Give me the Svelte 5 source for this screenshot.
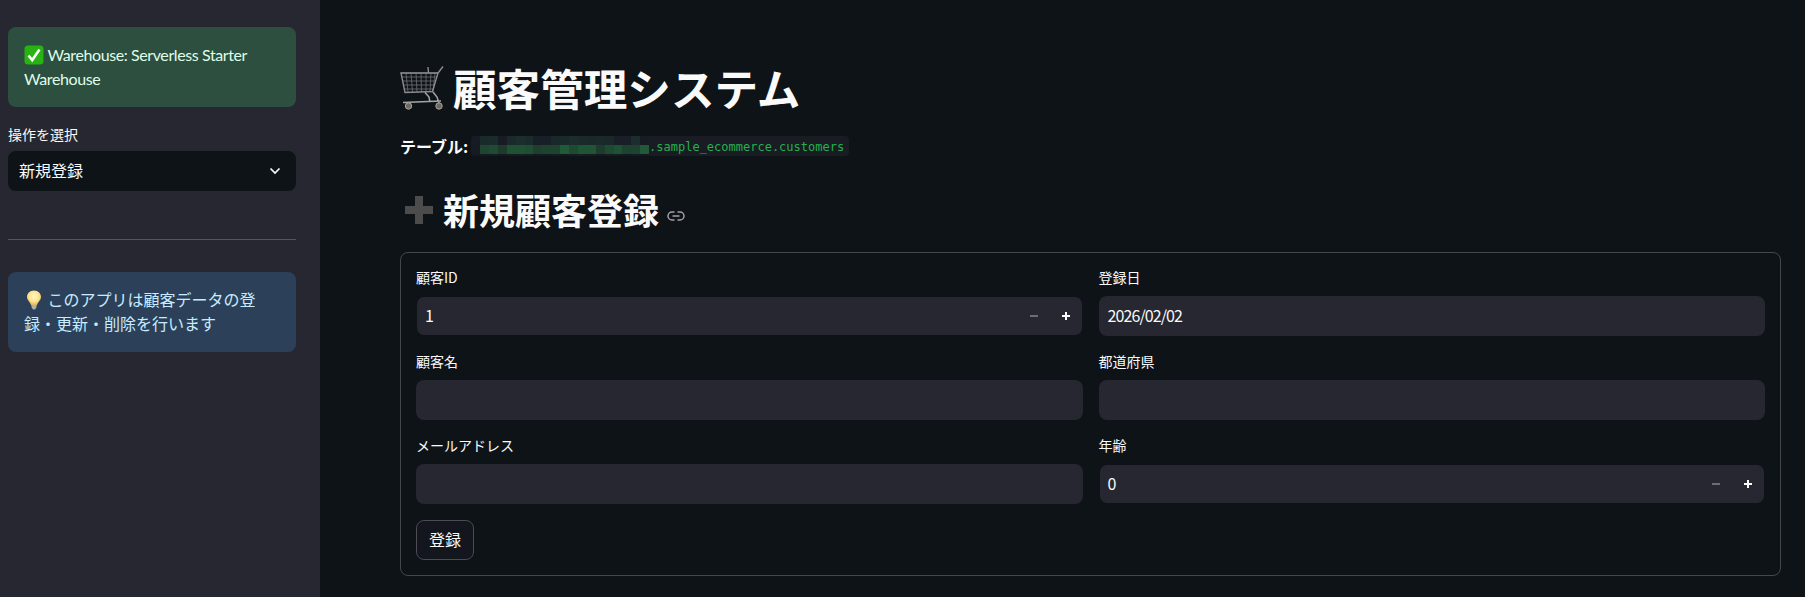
<script>
	// the masked catalog name in the reference is a mosaic, three rows of 9px cells
	const mosaic = [
		['#171b23', '#1a2a2b', '#1a2b2c', '#171c24', '#1a2a2b', '#1b2d2d', '#1b2b2b', '#181f26', '#181f26', '#1a2829', '#1a2a2b', '#1b2d2d', '#1a2a2b', '#1a2829', '#1a2a2b', '#1a2829', '#181f26', '#181f26', '#1b2d2d', '#171c24'],
		['#161a21', '#1f4431', '#1f4a34', '#1d3a2d', '#1f5235', '#1f5235', '#1f4e33', '#1d3f30', '#1e4331', '#1f4331', '#205a38', '#1e4a33', '#205437', '#205437', '#1d3c2e', '#1e4a33', '#1f5235', '#1e4231', '#1e4232', '#205a38'],
		['#14181f', '#14191f', '#151c20', '#14181f', '#151c21', '#161e22', '#151c20', '#14181f', '#14181f', '#151b20', '#14181f', '#151c20', '#161e22', '#151c20', '#14181f', '#151b20', '#151c20', '#14181f', '#151b20', '#14181f']
	];
</script>

<div class="page">
	<aside class="sidebar">
		<div class="alert success">
			<svg class="emoji" viewBox="0 0 20 20" aria-hidden="true">
				<rect x="0.5" y="0.5" width="19" height="19" rx="3.5" fill="#27b312" />
				<path d="M4.5 10.5 L8.2 15 L15.5 4.5" fill="none" stroke="#fff" stroke-width="2.6" />
			</svg>
			Warehouse: Serverless Starter Warehouse
		</div>

		<div class="side-label">操作を選択</div>
		<div class="select">
			<span>新規登録</span>
			<svg width="12" height="8" viewBox="0 0 12 8" aria-hidden="true">
				<path d="M1.5 1.5 L6 6 L10.5 1.5" fill="none" stroke="#fafafa" stroke-width="1.7" />
			</svg>
		</div>

		<hr />

		<div class="alert info">
			<svg class="emoji bulb" viewBox="0 0 20 20" aria-hidden="true">
				<defs>
					<radialGradient id="glow" cx="0.5" cy="0.4" r="0.6">
						<stop offset="0" stop-color="#fff6c8" />
						<stop offset="0.6" stop-color="#ffe38a" />
						<stop offset="1" stop-color="#e2b860" />
					</radialGradient>
				</defs>
				<path d="M10 0.5 C14.5 0.5 17 3.6 17 7 C17 10 14.2 11.5 13 15 L7 15 C5.8 11.5 3 10 3 7 C3 3.6 5.5 0.5 10 0.5 Z" fill="url(#glow)" />
				<path d="M7.2 15 L12.8 15 L12.2 18 L10.8 19.5 L9.2 19.5 L7.8 18 Z" fill="#aeb0ae" />
			</svg>
			このアプリは顧客データの登録・更新・削除を行います
		</div>
	</aside>

	<main class="main">
		<h1>
			<svg class="cart" viewBox="5 5 46 46" aria-hidden="true">
				<g fill="none" stroke="#6f7174" stroke-width="0.8">
					<path d="M6 14 L43 14 M6.8 18 L42 18 M7.6 22 L41 22 M8.4 26 L39.8 26 M9.2 30 L38.4 30" />
					<path d="M11 14 L13 33 M16 14 L17.5 33 M21 14 L22 33 M26 14 L26.5 33 M31 14 L31 33 M36 14 L35 33 M40 14 L38 32" />
				</g>
				<g fill="none" stroke="#8b8c8e" stroke-width="1.4">
					<path d="M6 14 L43 14 L37.5 32.5 L10 33.5 Z" />
					<path d="M43 14 L48 7.5" />
					<path d="M33 8 L33.5 14" />
				</g>
				<path d="M30 33.5 L34 38 L35 43 M38 33 L42 38 L44 44 M8 43.5 L46 42" fill="none" stroke="#a5a5a5" stroke-width="1.5" />
				<circle cx="13.5" cy="47" r="3.2" fill="#6f6a63" stroke="#a7a39b" />
				<circle cx="44" cy="47" r="3.2" fill="#6f6a63" stroke="#a7a39b" />
			</svg>
			<span>顧客管理システム</span>
		</h1>

		<div class="table-row">
			<strong>テーブル:</strong>
			<code>
				<span class="mosaic">
					{#each mosaic as row}
						{#each row as color}
							<i style="background: {color}"></i>
						{/each}
					{/each}
				</span>
				<span class="code-text">.sample_ecommerce.customers</span>
			</code>
		</div>

		<h2>
			<svg class="plus" width="28" height="28" viewBox="0 0 28 28" aria-hidden="true">
				<path d="M10 0 H18 V10 H28 V18 H18 V28 H10 V18 H0 V10 H10 Z" fill="#4c4c4c" />
			</svg>
			<span>新規顧客登録</span>
			<svg class="link" width="18" height="10" viewBox="0 0 18 10" aria-hidden="true">
				<path d="M7.5 1 H5 A4 4 0 0 0 5 9 H7.5 M10.5 1 H13 A4 4 0 0 1 13 9 H10.5 M5.5 5 H12.5" fill="none" stroke="#a3a3a8" stroke-width="1.5" />
			</svg>
		</h2>

		<form class="form" onsubmit={(e) => e.preventDefault()}>
			<div class="col">
				<div class="field">
					<div class="label">顧客ID</div>
					<div class="input number">
						<span class="value">1</span>
						<span class="step dim"><svg width="10" height="10" viewBox="0 0 10 10" aria-hidden="true"><path d="M1 5 H9" stroke="currentColor" stroke-width="2" /></svg></span>
						<span class="step"><svg width="10" height="10" viewBox="0 0 10 10" aria-hidden="true"><path d="M1 5 H9 M5 1 V9" stroke="currentColor" stroke-width="2" /></svg></span>
					</div>
				</div>
				<div class="field">
					<div class="label">顧客名</div>
					<div class="input"></div>
				</div>
				<div class="field">
					<div class="label">メールアドレス</div>
					<div class="input"></div>
				</div>
				<button type="submit">登録</button>
			</div>

			<div class="col">
				<div class="field">
					<div class="label">登録日</div>
					<div class="input"><span class="value">2026/02/02</span></div>
				</div>
				<div class="field">
					<div class="label">都道府県</div>
					<div class="input"></div>
				</div>
				<div class="field">
					<div class="label">年齢</div>
					<div class="input number">
						<span class="value">0</span>
						<span class="step dim"><svg width="10" height="10" viewBox="0 0 10 10" aria-hidden="true"><path d="M1 5 H9" stroke="currentColor" stroke-width="2" /></svg></span>
						<span class="step"><svg width="10" height="10" viewBox="0 0 10 10" aria-hidden="true"><path d="M1 5 H9 M5 1 V9" stroke="currentColor" stroke-width="2" /></svg></span>
					</div>
				</div>
			</div>
		</form>
	</main>
</div>

<style>
	:global(body) {
		background: #0e1318;
		color: #fafafa;
		font-family: 'Noto Sans CJK JP', 'Noto Sans', sans-serif;
		margin: 0;
	}

	.page {
		display: flex;
		height: 597px;
		overflow: hidden;
	}

	.sidebar {
		background: #262730;
		box-sizing: border-box;
		flex: 0 0 320px;
		padding: 27px 24px 0 8px;
	}

	.alert {
		border-radius: 8px;
		font-size: 16px;
		line-height: 24px;
		padding: 16px;
	}

	.success {
		background: #2d4f3f;
		color: #dffde9;
		font-family: Lato, 'Noto Sans CJK JP', sans-serif;
		letter-spacing: -0.4px;
	}

	.info {
		background: #2c4159;
		color: #c7ebff;
		padding: 15px 16px 17px;
	}

	.emoji {
		height: 20px;
		vertical-align: -4px;
		width: 20px;
	}

	.side-label {
		font-size: 14px;
		line-height: 20px;
		margin: 17px 0 7px;
	}

	.select {
		align-items: center;
		background: #0e1318;
		border-radius: 8px;
		display: flex;
		font-size: 16px;
		height: 40px;
		justify-content: space-between;
		padding: 0 15px 0 11px;
	}

	.select span {
		margin-bottom: 2px;
	}

	hr {
		border: none;
		border-top: 1px solid #55565e;
		margin: 48px 0 32px;
	}

	.main {
		box-sizing: border-box;
		flex: 1;
		min-width: 0;
		padding: 59px 24px 0 80px;
	}

	h1 {
		align-items: center;
		display: flex;
		font-size: 43.6px;
		font-weight: 700;
		gap: 7px;
		height: 56px;
		line-height: 56px;
		margin: 0;
	}

	.cart {
		height: 46px;
		width: 46px;
	}

	.table-row {
		align-items: center;
		display: flex;
		font-size: 16px;
		gap: 3px;
		height: 24px;
		margin-top: 19px;
	}

	.table-row strong {
		font-weight: 700;
	}

	code {
		align-items: center;
		background: #1a1c24;
		border-radius: 4px;
		color: #24b04e;
		display: flex;
		font-family: 'DejaVu Sans Mono', 'Liberation Mono', monospace;
		font-size: 12px;
		height: 20px;
		overflow: hidden;
		padding-right: 5px;
	}

	.code-text {
		margin-top: 2px;
	}

	.mosaic {
		display: grid;
		grid-template-columns: repeat(20, 8.9px);
		grid-template-rows: 9px 9px 2px;
	}

	.mosaic i {
		display: block;
	}

	h2 {
		align-items: center;
		display: flex;
		font-size: 36px;
		font-weight: 700;
		height: 44px;
		line-height: 44px;
		margin: 29px 0 21px;
	}

	.plus {
		margin: 2px 10px 0 5px;
	}

	.link {
		margin: 14px 0 0 8px;
	}

	.form {
		border: 1px solid #45464e;
		border-radius: 8px;
		box-sizing: border-box;
		display: grid;
		gap: 16px;
		grid-template-columns: 1fr 1fr;
		height: 324px;
		padding: 16px 15px;
	}

	.col {
		display: flex;
		flex-direction: column;
		gap: 17px;
		min-width: 0;
	}

	.label {
		font-size: 14px;
		height: 27px;
		line-height: 17px;
	}

	.input {
		align-items: center;
		background: #262730;
		border-radius: 8px;
		box-sizing: border-box;
		display: flex;
		font-size: 16px;
		height: 40px;
		letter-spacing: -0.9px;
		padding-left: 9px;
	}

	.number {
		background-clip: padding-box;
		border: 1px solid transparent;
		padding: 0 0 0 8px;
	}

	.value {
		flex: 1;
		margin-bottom: 2px;
	}

	.step {
		align-items: center;
		color: #fafafa;
		display: flex;
		height: 100%;
		justify-content: center;
		width: 32px;
	}

	.step.dim {
		color: #6b6c75;
	}

	button {
		align-self: flex-start;
		background: #13161d;
		border: 1px solid #4a4b53;
		border-radius: 8px;
		color: #fafafa;
		font-family: inherit;
		font-size: 16px;
		height: 40px;
		margin-top: -1px;
		padding: 0 0 2px;
		width: 58px;
	}
</style>
